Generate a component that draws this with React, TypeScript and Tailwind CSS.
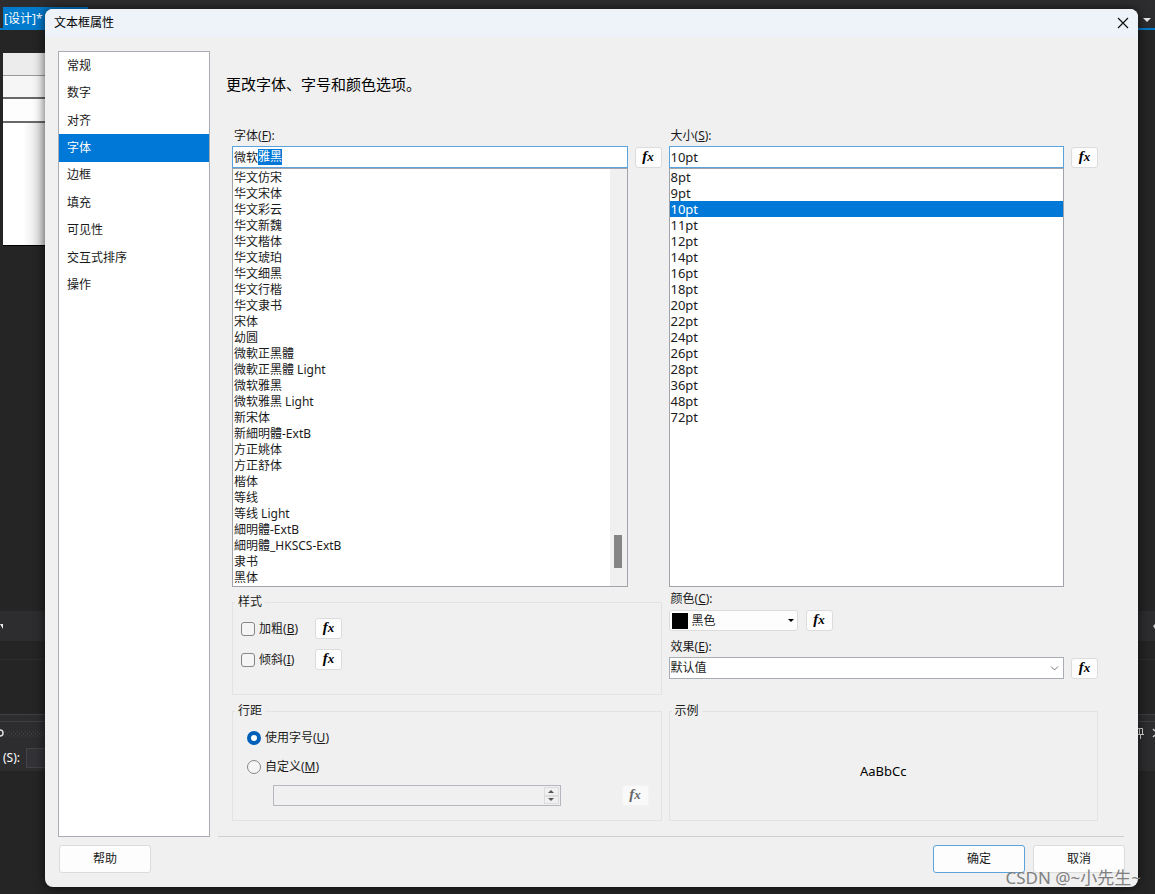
import { useState } from 'react';
import type { ReactNode } from 'react';

const TABS = ['常规', '数字', '对齐', '字体', '边框', '填充', '可见性', '交互式排序', '操作'];

const FONTS = [
  '华文仿宋', '华文宋体', '华文彩云', '华文新魏', '华文楷体', '华文琥珀', '华文细黑', '华文行楷', '华文隶书',
  '宋体', '幼圆', '微軟正黑體', '微軟正黑體 Light', '微软雅黑', '微软雅黑 Light', '新宋体', '新細明體-ExtB',
  '方正姚体', '方正舒体', '楷体', '等线', '等线 Light', '細明體-ExtB', '細明體_HKSCS-ExtB', '隶书', '黑体',
];

const SIZES = [
  '8pt', '9pt', '10pt', '11pt', '12pt', '14pt', '16pt', '18pt', '20pt', '22pt', '24pt', '26pt', '28pt', '36pt', '48pt', '72pt',
];

function FxButton({ label, disabled = false }: { label: string; disabled?: boolean }) {
  return (
    <button
      type="button"
      aria-label={label}
      disabled={disabled}
      className="flex h-[21px] w-[27px] shrink-0 items-baseline justify-center rounded-[3px] border border-[#dcdcdc] bg-[#fdfdfd] font-['Liberation_Serif',serif] text-[15px] leading-4 font-bold text-black italic disabled:border-[#f4f4f4] disabled:bg-[#f9f9f9] disabled:text-[#666]"
    >
      f<span className="text-[13px]">x</span>
    </button>
  );
}

function Label({ id, text, hotkey }: { id: string; text: string; hotkey: string }) {
  return (
    <label htmlFor={id} className="ml-[2px] block leading-4">
      {text}(<u>{hotkey}</u>):
    </label>
  );
}

function Group({ title, children }: { title: string; children: ReactNode }) {
  return (
    <fieldset className="min-w-0 border border-[#e3e3e3]">
      <legend className="ml-[2px] px-[3px] leading-4">{title}</legend>
      {children}
    </fieldset>
  );
}

function CheckRow({ text, hotkey }: { text: string; hotkey: string }) {
  return (
    <div className="flex items-center">
      <label className="flex w-[74px] items-center gap-1">
        <input type="checkbox" className="size-[14px] appearance-none rounded-[3px] border border-[#868686] bg-[#f5f5f5] checked:bg-[#0067c0]" />
        <span>{text}(<u>{hotkey}</u>)</span>
      </label>
      <FxButton label={text} />
    </div>
  );
}

function Backdrop() {
  return (
    <div className="absolute inset-0 flex flex-col bg-[#252526] text-white" aria-hidden>
      <div className="h-7 bg-[#2d2d30] pt-[7px] pl-[3px]">
        <div className="flex">
          <div className="h-[21px] w-[85px] bg-[#007acc] pl-px text-[12px] leading-[23px]">[设计]*</div>
          <svg className="mt-[11px] mr-1 ml-auto" width="8" height="4" viewBox="0 0 8 4"><path d="M0 0h8L4 4z" fill="#e8e8e8" /></svg>
        </div>
      </div>
      <div className="h-[2px] bg-[#007acc]" />
      <div className="mt-[23px] ml-[3px] w-[50px] bg-[#fdfdfd]">
        <div className="h-[23px] border-b border-[#999] bg-[#ececec]" />
        <div className="h-[23px] border-b-2 border-[#686868] bg-[#f6f6f6]" />
        <div className="h-[24px] border-b-2 border-[#686868] bg-[#fdfdfd]" />
        <div className="h-[123px] border-b border-black bg-linear-to-r from-white from-40% to-[#cfcfcf]" />
      </div>
      <div className="mt-[365px] flex h-[30px] items-center justify-between bg-[#2d2d30]">
        <svg width="3" height="5" viewBox="0 0 3 5"><path d="M0 0h3v5z" fill="#eee" /></svg>
        <svg width="2" height="5" viewBox="0 0 2 5"><path d="M2 0v5L0 2z" fill="#ccc" /></svg>
      </div>
      <div className="mt-[18px] h-px bg-[#2d2d30]" />
      <div className="mt-[54px] h-[57px] border-t border-[#3f3f46] bg-[#2d2d30] pt-[6px]">
        <div className="h-[27px] border-t border-[#3f3f46]">
          <svg className="w-full" height="26">
            <circle cx="0" cy="11" r="3" fill="none" stroke="#ddd" strokeWidth="1.5" />
            <path d="M5 10h40M5 14h40" stroke="#4a4a50" strokeDasharray="1 3" />
            <path d="M7 12h40" stroke="#4a4a50" strokeDasharray="1 3" />
            <svg x="100%" overflow="visible">
              <path d="M-18 6.500h5.500v6M-15.500 6v6M-18 12.500h7M-14.500 13v4" fill="none" stroke="#ddd" />
              <path d="M-2 7l2 2M-2 15l2-2" fill="none" stroke="#ccc" strokeWidth="1.500" />
            </svg>
          </svg>
        </div>
        <div className="flex h-5 items-center gap-[6px] pl-[3px] text-[12px]">
          <span>(S):</span>
          <span className="h-5 w-10 border border-[#434346] bg-[#333337]" />
        </div>
      </div>
    </div>
  );
}

export default function App() {
  const [tab, setTab] = useState('字体');
  const [font, setFont] = useState('微软雅黑');
  const [size, setSize] = useState('10pt');
  const [spacing, setSpacing] = useState('auto');

  const fieldClass = 'h-[22px] w-full border border-[#5ba3dc] bg-white px-px outline-none';
  const radioClass = 'size-[14px] appearance-none rounded-full border border-[#868686] bg-[#f5f5f5] checked:border-[4px] checked:border-[#005fb8] checked:bg-white';

  return (
    <div className="relative h-screen min-h-[894px] overflow-hidden font-['Noto_Sans','Noto_Sans_CJK_SC',sans-serif] text-[12px] text-[#1a1a1a]">
      <Backdrop />

      <div role="dialog" aria-labelledby="dialog-title" className="absolute inset-x-[17px] top-[9px] bottom-[7px] left-[45px] flex flex-col overflow-hidden rounded-lg bg-[#f0f0f0] shadow-[0_0_12px_#000a]">
        <header className="flex h-7 shrink-0 items-center justify-between bg-[#edf3f9] pr-[9px] pl-[9px] text-black">
          <h1 id="dialog-title">文本框属性</h1>
          <button type="button" aria-label="关闭">
            <svg width="12" height="12" viewBox="0 0 12 12"><path d="M1 1l10 10M11 1L1 11" stroke="#111" strokeWidth="1.2" /></svg>
          </button>
        </header>

        <div className="flex gap-2 pt-[14px] pr-[14px] pl-[13px]">
          <nav className="w-[152px] shrink-0 border border-[#a9adb3] bg-white">
            <ul className="grid h-[247px] grid-rows-9">
              {TABS.map((name) => (
                <li key={name} className="flex">
                  <button
                    type="button"
                    aria-current={tab === name}
                    onClick={() => setTab(name)}
                    className="w-full pl-2 text-left aria-[current=true]:bg-[#0078d7] aria-[current=true]:text-white"
                  >
                    {name}
                  </button>
                </li>
              ))}
            </ul>
          </nav>

          <main className="min-w-0 flex-1 border-b border-[#cfcfcf] pb-[15px]">
            <h2 className="ml-2 pt-[22px] text-[15px] leading-[22px] text-black">更改字体、字号和颜色选项。</h2>

            <div className="mt-[33px] mr-[26px] ml-[14px] grid grid-cols-2 gap-x-[7px]">
              <section className="flex flex-col">
                <Label id="font" text="字体" hotkey="F" />
                <div className="mt-[2px] flex items-center gap-[7px]">
                  <div className="relative flex-1">
                    <input id="font" value={font} onChange={(e) => setFont(e.target.value)} className={fieldClass} />
                    {font === '微软雅黑' && (
                      <span className="pointer-events-none absolute top-[3px] left-[26px] bg-[#0078d7] leading-4 text-white">雅黑</span>
                    )}
                  </div>
                  <FxButton label="字体" />
                </div>
                <div className="mr-[34px] flex flex-1 border border-[#a0a4aa] bg-white">
                  <ul role="listbox" aria-label="字体" className="flex-1 pt-px pl-px leading-4">
                    {FONTS.map((name) => (
                      <li key={name} role="option" aria-selected={false} onClick={() => setFont(name)} className="h-4">{name}</li>
                    ))}
                  </ul>
                  <div className="flex w-[17px] items-end justify-center bg-[#f0f0f0] pb-[18px]">
                    <div className="h-[33px] w-2 bg-[#858585]" />
                  </div>
                </div>
              </section>

              <section className="flex flex-col">
                <Label id="size" text="大小" hotkey="S" />
                <div className="mt-[2px] flex items-center gap-[7px]">
                  <input id="size" value={size} onChange={(e) => setSize(e.target.value)} className={`${fieldClass} min-w-0 flex-1 text-[13px]`} />
                  <FxButton label="大小" />
                </div>
                <ul role="listbox" aria-label="大小" className="mr-[34px] flex-1 border border-[#a0a4aa] bg-white text-[13px] leading-4">
                  {SIZES.map((name) => (
                    <li
                      key={name}
                      role="option"
                      aria-selected={size === name}
                      onClick={() => setSize(name)}
                      className="h-4 pl-px aria-selected:bg-[#0078d7] aria-selected:text-white"
                    >
                      {name}
                    </li>
                  ))}
                </ul>
              </section>

              <section className="mt-[7px] flex flex-col gap-2">
                <Group title="样式">
                  <div className="flex flex-col gap-[10px] pt-2 pb-6 pl-2">
                    <CheckRow text="加粗" hotkey="B" />
                    <CheckRow text="倾斜" hotkey="I" />
                  </div>
                </Group>
                <Group title="行距">
                  <div className="flex flex-col gap-2 pt-2 pr-3 pb-[14px] pl-[14px]">
                    <label className="flex h-[21px] items-center gap-1">
                      <input type="radio" name="spacing" checked={spacing === 'auto'} onChange={() => setSpacing('auto')} className={radioClass} />
                      <span>使用字号(<u>U</u>)</span>
                    </label>
                    <label className="flex h-[21px] items-center gap-1">
                      <input type="radio" name="spacing" checked={spacing === 'custom'} onChange={() => setSpacing('custom')} className={radioClass} />
                      <span>自定义(<u>M</u>)</span>
                    </label>
                    <div className="flex items-center justify-between pl-[26px]">
                      <div className="mr-[61px] flex h-[21px] flex-1 border border-[#b4b7bd] p-px">
                        <input aria-label="自定义行距" disabled className="min-w-0 flex-1" />
                        <div className="flex w-[15px] flex-col">
                          <button type="button" disabled aria-label="增加" className="flex flex-1 items-center justify-center border border-[#dcdcdc]">
                            <svg width="6" height="3" viewBox="0 0 6 3"><path d="M3 0l3 3H0z" fill="#555" /></svg>
                          </button>
                          <button type="button" disabled aria-label="减少" className="flex flex-1 items-center justify-center border border-[#dcdcdc]">
                            <svg width="6" height="3" viewBox="0 0 6 3"><path d="M0 0h6L3 3z" fill="#555" /></svg>
                          </button>
                        </div>
                      </div>
                      <FxButton label="自定义行距" disabled />
                    </div>
                  </div>
                </Group>
              </section>

              <section className="mt-1 flex flex-col">
                <Label id="color" text="颜色" hotkey="C" />
                <div className="mt-[3px] flex items-center gap-2">
                  <button id="color" type="button" className="flex h-[21px] w-[129px] items-center rounded-[3px] border border-[#dcdcdc] bg-[#fdfdfd] pr-[3px] pl-[2px]">
                    <span className="size-4 bg-black" />
                    <span className="ml-1">黑色</span>
                    <svg className="ml-auto" width="6" height="3" viewBox="0 0 6 3"><path d="M0 0h6L3 3z" fill="#000" /></svg>
                  </button>
                  <FxButton label="颜色" />
                </div>
                <div className="mt-2">
                  <Label id="effect" text="效果" hotkey="E" />
                </div>
                <div className="mt-[2px] flex items-center gap-[7px]">
                  <div className="relative flex-1">
                    <select id="effect" className="h-[22px] w-full appearance-none border border-[#a9adb3] bg-white px-px">
                      <option>默认值</option>
                    </select>
                    <svg className="pointer-events-none absolute top-[9px] right-[5px]" width="9" height="5" viewBox="0 0 9 5" fill="none">
                      <path d="M1 .5l3.500 3.500L8 .5" stroke="#777" />
                    </svg>
                  </div>
                  <FxButton label="效果" />
                </div>
                <div className="mt-6 grid flex-1">
                  <Group title="示例">
                    <p className="pt-[42px] text-center text-[13px] leading-5 text-black">AaBbCc</p>
                  </Group>
                </div>
              </section>
            </div>
          </main>
        </div>

        <footer className="mt-2 flex gap-2 pr-[13px] pl-[14px]">
          <button type="button" className="mr-auto h-7 w-[92px] rounded-[3px] border border-[#dcdcdc] bg-[#fdfdfd]">帮助</button>
          <button type="button" className="h-7 w-[92px] rounded-[3px] border border-[#5ba3dc] bg-[#fdfdfd]">确定</button>
          <button type="button" className="h-7 w-[92px] rounded-[3px] border border-[#dcdcdc] bg-[#fdfdfd]">取消</button>
        </footer>
      </div>

      <p className="absolute right-[14px] bottom-[6px] text-[17px] leading-5 text-[#808080]">CSDN @~小先生~</p>
    </div>
  );
}
